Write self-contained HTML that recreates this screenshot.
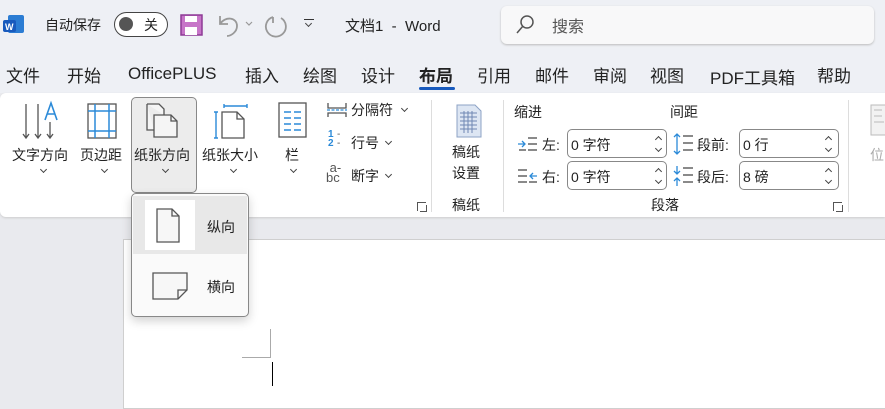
<!DOCTYPE html><html><head><meta charset="utf-8"><style>
*{margin:0;padding:0;box-sizing:border-box}
body{width:885px;height:400px;overflow:hidden;background:#e9eaee;font-family:"Liberation Sans","Noto Sans CJK SC",sans-serif;color:#222;position:relative}
.a{position:absolute;white-space:nowrap}
.t{font-size:14px}
.tab{font-size:17px;top:62px}
.lbl{font-size:14px}
.cv{position:absolute;width:5px;height:5px;border-right:1.2px solid #444;border-bottom:1.2px solid #444;transform:rotate(45deg)}
.cu{position:absolute;width:5px;height:5px;border-left:1.2px solid #444;border-top:1.2px solid #444;transform:rotate(45deg)}
.spin{position:absolute;height:29px;border:1px solid #888;border-radius:5px;background:#fff;font-size:14px;padding:5px 0 0 3px}
.dl{position:absolute;width:9px;height:9px;border-left:1px solid #555;border-top:1px solid #555}
.dl:after{content:"";position:absolute;left:2px;top:2px;width:6px;height:6px;border-right:1px solid #555;border-bottom:1px solid #555}
</style></head><body>
<div class="a" style="left:0;top:0;width:885px;height:93px;background:#eef0f5"></div>
<svg class="a" style="left:3px;top:13px" width="22" height="22"><rect x="5" y="2" width="16" height="18" rx="2" fill="#2b7cd3"/><rect x="0" y="7" width="13" height="12" rx="2" fill="#185abd"/><text x="2" y="17" font-size="9" font-weight="bold" fill="#fff" font-family="Liberation Sans">W</text></svg>
<div class="a t" style="left:45px;top:15px">自动保存</div>
<div class="a" style="left:114px;top:12px;width:54px;height:25px;border:1.5px solid #444;border-radius:13px;background:#fff"><div class="a" style="left:4px;top:4px;width:14px;height:14px;border-radius:7px;background:#555"></div><div class="a t" style="left:29px;top:2px">关</div></div>
<svg class="a" style="left:180px;top:14px" width="24" height="22"><rect x="1" y="1" width="21" height="20" fill="#c775c8" stroke="#8e3b96" stroke-width="1.5"/><rect x="5" y="2" width="12" height="6" fill="#fff"/><rect x="5" y="13" width="12" height="8" fill="#fff"/></svg>
<svg class="a" style="left:215px;top:12px" width="80" height="26" fill="none" stroke="#999" stroke-width="1.8"><path d="M5 4 L5 12 L13 12 M5 12 C10 4 22 5 22 14 C22 20 16 24 12 24"/><path d="M31 10l3 3 3-3" stroke-width="1.2"/><path d="M58 5 A10 10 0 1 0 66 6 M58 5 L58 11" /></svg>
<div class="a" style="left:304px;top:19px;width:10px;border-top:1.5px solid #333"></div>
<div class="cv" style="left:306px;top:21px"></div>
<div class="a t" style="left:345px;top:15px;font-size:15px">文档1&nbsp; - &nbsp;Word</div>
<div class="a" style="left:501px;top:6px;width:373px;height:38px;background:#f8f8f9;border-radius:6px;box-shadow:0 1px 2px #bbb"></div>
<svg class="a" style="left:515px;top:14px" width="20" height="22" fill="none" stroke="#555" stroke-width="1.5"><circle cx="12" cy="8" r="6"/><path d="M8 12 L2 19"/></svg>
<div class="a" style="left:552px;top:13px;font-size:16px;color:#555">搜索</div>
<div class="a tab" style="left:6px">文件</div>
<div class="a tab" style="left:67px">开始</div>
<div class="a tab" style="left:128px;top:64px">OfficePLUS</div>
<div class="a tab" style="left:245px">插入</div>
<div class="a tab" style="left:303px">绘图</div>
<div class="a tab" style="left:361px">设计</div>
<div class="a tab" style="left:419px;font-weight:bold">布局</div>
<div class="a" style="left:419px;top:87px;width:36px;height:3px;background:#185abd;border-radius:2px"></div>
<div class="a tab" style="left:477px">引用</div>
<div class="a tab" style="left:535px">邮件</div>
<div class="a tab" style="left:593px">审阅</div>
<div class="a tab" style="left:650px">视图</div>
<div class="a tab" style="left:710px;top:64px">PDF工具箱</div>
<div class="a tab" style="left:817px">帮助</div>
<div class="a" style="left:0;top:93px;width:885px;height:124px;background:#fff;border-radius:6px 0 0 6px;box-shadow:0 1px 2px #ccc"></div>
<svg class="a" style="left:22px;top:100px" width="40" height="40" fill="none" stroke="#555" stroke-width="1.3"><path d="M4 4v34M1 34l3 4 3-4M16 4v34M13 34l3 4 3-4M28 22v16M25 34l3 4 3-4"/><path d="M23 20 L29 3 L35 20 M25 14h8" stroke="#2b8ad8" stroke-width="1.6"/></svg>
<div class="a lbl" style="left:12px;top:145px">文字方向</div><div class="cv" style="left:41px;top:167px"></div>
<svg class="a" style="left:86px;top:102px" width="32" height="38" fill="none"><rect x="2" y="2" width="28" height="34" stroke="#555" stroke-width="1.3"/><path d="M9 2v34M23 2v34M2 9h28M2 29h28" stroke="#2b8ad8" stroke-width="1.5"/></svg>
<div class="a lbl" style="left:80px;top:145px">页边距</div><div class="cv" style="left:102px;top:167px"></div>
<div class="a" style="left:131px;top:97px;width:66px;height:96px;background:#ececec;border:1px solid #888;border-radius:5px"></div>
<svg class="a" style="left:144px;top:102px" width="40" height="38" fill="none" stroke="#555" stroke-width="1.3"><path d="M3 2h12l5 5v6M3 2v26h7" fill="#f5f5f5"/><path d="M10 13h17l6 6v16H10z" fill="#f5f5f5"/><path d="M27 13v6h6"/></svg>
<div class="a lbl" style="left:134px;top:145px">纸张方向</div><div class="cv" style="left:163px;top:167px"></div>
<svg class="a" style="left:213px;top:102px" width="36" height="38" fill="none"><path d="M9 10h15l7 7v19H9z" stroke="#555" stroke-width="1.3"/><path d="M24 10v7h7" stroke="#555" stroke-width="1.3"/><path d="M11 4h23M11 2v4M34 2v4M3 10v26M1 10h4M1 36h4" stroke="#2b8ad8" stroke-width="1.4"/></svg>
<div class="a lbl" style="left:202px;top:145px">纸张大小</div><div class="cv" style="left:231px;top:167px"></div>
<svg class="a" style="left:278px;top:102px" width="30" height="36" fill="none"><rect x="1" y="1" width="27" height="34" stroke="#555" stroke-width="1.3"/><path d="M6 10h7M16 10h7M6 16h7M16 16h7M6 22h7M16 22h7M6 28h7M16 28h7" stroke="#2b8ad8" stroke-width="1.5"/></svg>
<div class="a lbl" style="left:285px;top:145px">栏</div><div class="cv" style="left:291px;top:167px"></div>
<svg class="a" style="left:326px;top:102px" width="22" height="16" fill="none" stroke="#555" stroke-width="1.3"><path d="M2 1v5h18V1M2 15v-4h18v4"/><path d="M1 8h20" stroke="#2b8ad8" stroke-dasharray="3 1.5"/></svg>
<div class="a lbl" style="left:351px;top:100px">分隔符</div><div class="cv" style="left:402px;top:106px"></div>
<div class="a" style="left:328px;top:130px;font-size:10px;line-height:9px;color:#2b8ad8;font-weight:bold">1<br>2</div><div class="a" style="left:337px;top:130px;font-size:10px;line-height:9px;color:#555">-<br>-</div>
<div class="a lbl" style="left:351px;top:133px">行号</div><div class="cv" style="left:386px;top:139px"></div>
<div class="a" style="left:326px;top:163px;font-size:13px;line-height:10px;color:#555">&nbsp;a-<br>bc</div>
<div class="a lbl" style="left:351px;top:166px">断字</div><div class="cv" style="left:386px;top:172px"></div>
<div class="dl" style="left:417px;top:202px"></div>
<div class="a" style="left:431px;top:100px;width:1px;height:112px;background:#ddd"></div>
<svg class="a" style="left:456px;top:104px" width="26" height="34"><path d="M1 1h18l6 6v26H1z" fill="#dde6f3" stroke="#8da3c6"/><g stroke="#6e87b3" stroke-width="1"><path d="M4 9h17M4 13h17M4 17h17M4 21h17M4 25h17M8 7v22M12 7v22M16 7v22"/></g></svg>
<div class="a lbl" style="left:452px;top:142px;line-height:21px">稿纸<br>设置</div>
<div class="a lbl" style="left:452px;top:195px">稿纸</div>
<div class="a" style="left:503px;top:100px;width:1px;height:112px;background:#ddd"></div>
<div class="a lbl" style="left:514px;top:102px">缩进</div>
<div class="a lbl" style="left:670px;top:102px">间距</div>
<svg class="a" style="left:517px;top:136px" width="22" height="16" fill="none" stroke-width="1.3"><path d="M11 2h9M11 8h9M11 14h9M2 14h7" stroke="#444"/><path d="M1 8h7M5 5l3 3-3 3" stroke="#2b8ad8"/></svg>
<div class="a lbl" style="left:542px;top:135px">左:</div>
<div class="spin" style="left:567px;top:129px;width:100px">0 字符<div class="cu" style="left:88px;top:7px"></div><div class="cv" style="left:88px;top:16px"></div></div>
<svg class="a" style="left:517px;top:168px" width="22" height="16" fill="none" stroke-width="1.3"><path d="M1 2h9M1 8h9M1 14h9M12 14h8" stroke="#444"/><path d="M20 8h-7M16 5l-3 3 3 3" stroke="#2b8ad8"/></svg>
<div class="a lbl" style="left:542px;top:167px">右:</div>
<div class="spin" style="left:567px;top:161px;width:100px">0 字符<div class="cu" style="left:88px;top:7px"></div><div class="cv" style="left:88px;top:16px"></div></div>
<svg class="a" style="left:673px;top:132px" width="22" height="24" fill="none" stroke-width="1.3"><path d="M10 4h10M10 11h10M10 18h10" stroke="#444"/><path d="M4 2v20M1 5l3-3 3 3M1 19l3 3 3-3" stroke="#2b8ad8"/></svg>
<div class="a lbl" style="left:697px;top:135px">段前:</div>
<div class="spin" style="left:739px;top:129px;width:100px">0 行<div class="cu" style="left:86px;top:7px"></div><div class="cv" style="left:86px;top:16px"></div></div>
<svg class="a" style="left:673px;top:164px" width="22" height="24" fill="none" stroke-width="1.3"><path d="M10 4h10M10 11h10M10 18h10" stroke="#444"/><path d="M4 2v8M4 14v8M1 7l3 3 3-3M1 17l3-3 3 3" stroke="#2b8ad8"/></svg>
<div class="a lbl" style="left:697px;top:167px">段后:</div>
<div class="spin" style="left:739px;top:161px;width:100px">8 磅<div class="cu" style="left:86px;top:7px"></div><div class="cv" style="left:86px;top:16px"></div></div>
<div class="a lbl" style="left:651px;top:195px">段落</div>
<div class="dl" style="left:833px;top:202px"></div>
<div class="a" style="left:848px;top:100px;width:1px;height:112px;background:#ddd"></div>
<svg class="a" style="left:870px;top:104px" width="15" height="32"><rect x="1" y="1" width="20" height="30" fill="#f2f2f2" stroke="#bbb"/><path d="M4 6h8M4 12h8M4 18h10" stroke="#bbb"/></svg>
<div class="a lbl" style="left:870px;top:145px;color:#aaa">位</div>
<div class="a" style="left:123px;top:239px;width:770px;height:170px;background:#fff;border:1px solid #cfcfcf"></div>
<div class="a" style="left:270px;top:329px;width:1px;height:29px;background:#aaa"></div>
<div class="a" style="left:242px;top:357px;width:29px;height:1px;background:#aaa"></div>
<div class="a" style="left:272px;top:362px;width:1px;height:24px;background:#000"></div>
<div class="a" style="left:131px;top:193px;width:118px;height:124px;background:#fafafa;border:1px solid #888;border-radius:5px;box-shadow:0 4px 10px rgba(0,0,0,.18)"></div>
<div class="a" style="left:133px;top:196px;width:114px;height:58px;background:#e8e8e8"></div>
<div class="a" style="left:145px;top:200px;width:50px;height:50px;background:#fff"></div>
<svg class="a" style="left:155px;top:207px" width="30" height="38" fill="none" stroke="#555" stroke-width="1.3"><path d="M2 2h15l7 7v26H2z" fill="#f7f7f7"/><path d="M17 2v7h7"/></svg>
<div class="a lbl" style="left:207px;top:217px">纵向</div>
<svg class="a" style="left:151px;top:271px" width="40" height="30" fill="none" stroke="#555" stroke-width="1.3"><path d="M2 2h34v17l-9 9H2z" fill="#f7f7f7"/><path d="M36 19h-9v9"/></svg>
<div class="a lbl" style="left:207px;top:277px">横向</div>
</body></html>
